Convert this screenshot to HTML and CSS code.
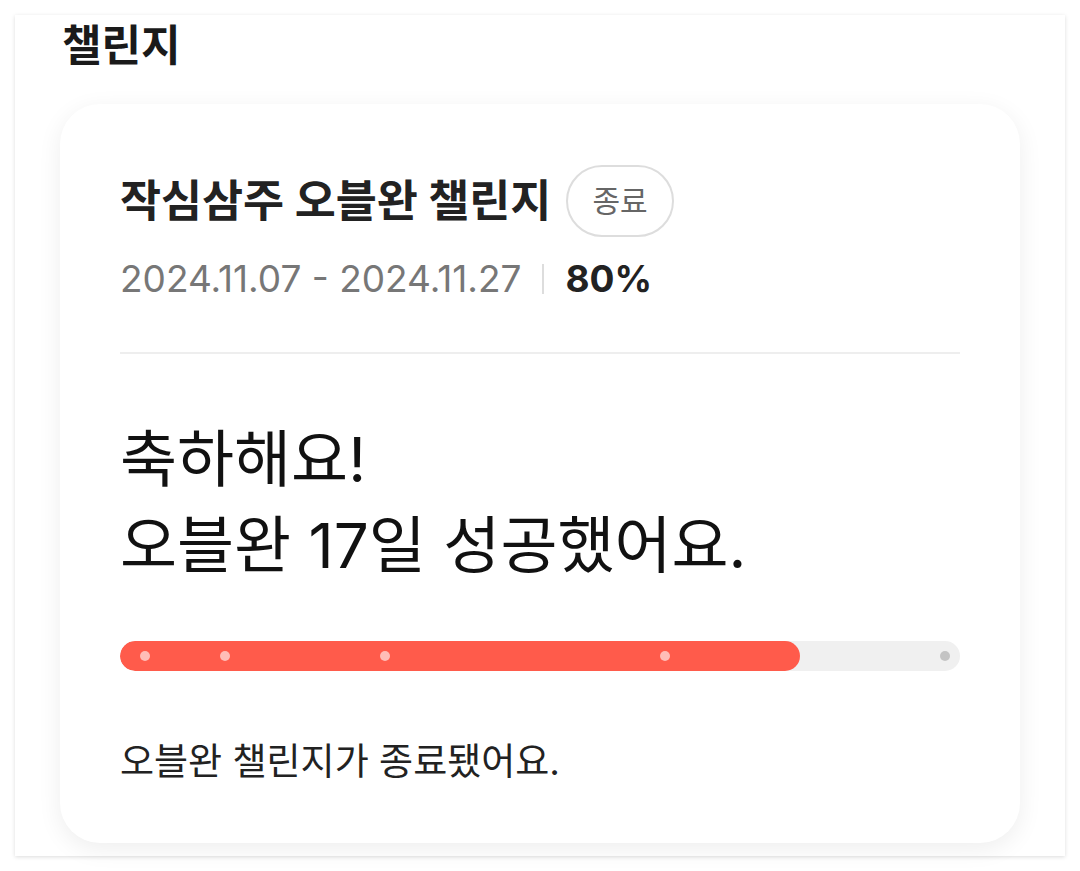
FILE: index.html
```html
<!DOCTYPE html>
<html lang="ko">
<head>
  <meta charset="UTF-8" />
  <title>챌린지</title>
  <link rel="stylesheet" href="styles.css">
</head>
<body>
  <section class="panel">
    <h2 class="panel-title">챌린지</h2>

    <div class="card">
      <div class="card-head">
        <h3 class="challenge-name">작심삼주 오블완 챌린지</h3>
        <span class="badge">종료</span>
      </div>
      <div class="period">
        <span>2024.11.07 - 2024.11.27</span>
        <span class="sep"></span>
        <strong class="rate">80%</strong>
      </div>

      <hr class="divider" />

      <p class="result">축하해요!<br />오블완 17일 성공했어요.</p>

      <div class="track">
        <div class="fill" style="width: 81%"></div>
        <span class="dot on" style="left: 25px"></span>
        <span class="dot on" style="left: 105px"></span>
        <span class="dot on" style="left: 265px"></span>
        <span class="dot on" style="left: 545px"></span>
        <span class="dot" style="left: 825px"></span>
      </div>

      <p class="note">오블완 챌린지가 종료됐어요.</p>
    </div>
  </section>
</body>
</html>
```

FILE: styles.css
```css
body {
  margin: 0;
  padding: 15px;
  background: #fff;
  font-family: 'Inter', 'Noto Sans CJK KR', sans-serif;
  color: #111;
}

.panel {
  background: #fff;
  padding: 0 45px 13px;
  box-shadow: 0 1px 4px rgba(0, 0, 0, 0.14);
}

.panel-title {
  margin: 0 0 29px;
  padding-left: 2px;
  font-size: 43px;
  line-height: 60px;
  font-weight: 700;
  color: #1a1a1a;
}

.card {
  background: #fff;
  border-radius: 40px;
  padding: 61px 60px 56px;
  box-shadow: 0 6px 24px rgba(0, 0, 0, 0.07);
}

.card-head {
  display: flex;
  align-items: center;
  gap: 15px;
}

.challenge-name {
  margin: 0;
  font-size: 44.6px;
  line-height: 60px;
  font-weight: 700;
  color: #222;
}

.badge {
  border: 2px solid #ddd;
  border-radius: 40px;
  padding: 14px 24px;
  font-size: 30px;
  line-height: 40px;
  color: #666;
}

.period {
  display: flex;
  align-items: center;
  gap: 20px;
  margin-top: 20px;
  font-size: 37px;
  line-height: 44px;
  color: #777;
}

.sep {
  width: 2px;
  height: 30px;
  background: #ddd;
}

.rate {
  margin-left: 2px;
  color: #222;
  font-weight: 700;
}

.divider {
  border: none;
  height: 2px;
  background: #eee;
  margin: 51px 0 0;
}

.result {
  margin: 63px 0 0;
  font-size: 62px;
  line-height: 86px;
  color: #111;
}

.track {
  position: relative;
  height: 30px;
  margin-top: 52px;
  background: #f0f0f0;
  border-radius: 15px;
  overflow: hidden;
}

.fill {
  height: 100%;
  background: #ff5b4b;
  border-radius: 15px;
}

.dot {
  position: absolute;
  top: 10px;
  width: 10px;
  height: 10px;
  margin-left: -5px;
  border-radius: 50%;
  background: #c4c4c4;
}

.dot.on {
  background: rgba(255, 255, 255, 0.6);
}

.note {
  margin: 66px 0 0;
  font-size: 37px;
  line-height: 50px;
  color: #222;
}
```
